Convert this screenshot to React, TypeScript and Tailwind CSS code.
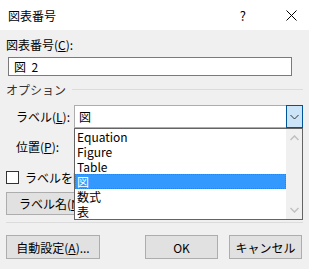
export default function App() {
  const items = ["Equation", "Figure", "Table", "図", "数式", "表"];
  return (
    <div className="relative w-[309px] h-[269px] bg-[#f0f0f0] text-[12px] text-black overflow-hidden font-['Noto_Sans_CJK_JP','Noto_Sans',sans-serif]">
      {/* title bar */}
      <div className="h-[30px] bg-white flex items-center pl-[8px]">
        <span className="leading-[15px]">図表番号</span>
        <span className="ml-auto mr-[40px] text-[13px] leading-[15px]">?</span>
        <svg width="11" height="11" viewBox="0 0 11 11" className="mr-[12px]">
          <path d="M0.5 0.5 L10.5 10.5 M10.5 0.5 L0.5 10.5" stroke="#000" strokeWidth="1" />
        </svg>
      </div>

      <div className="px-[6px]">
        <div className="mt-[7px] leading-[15px]">
          図表番号(<span className="underline">C</span>):
        </div>
        <div className="mt-[5px] ml-[2px] w-[284px] h-[19px] border border-[#7a7a7a] bg-white flex items-center pl-[5px] leading-[15px]">
          図&nbsp;&nbsp;2
        </div>

        <div className="mt-[6px] flex items-center h-[15px]">
          <span className="leading-[15px] text-[#333]">オプション</span>
          <div className="ml-[6px] flex-1 h-px bg-[#dcdcdc]" />
        </div>

        <div className="mt-[8px] flex items-center h-[23px]">
          <span className="pl-[10px] w-[68px] leading-[15px]">
            ラベル(<span className="underline">L</span>):
          </span>
          <div className="w-[229px] h-[23px] border border-[#adadad] bg-white flex items-center">
            <span className="pl-[4px] flex-1 leading-[15px]">図</span>
            <div className="w-[17px] h-[23px] -my-px -mr-px border border-[#005499] bg-[#cce4f7] flex items-center justify-center">
              <svg width="9" height="6" viewBox="0 0 9 6">
                <path d="M0.5 1 L4.5 5 L8.5 1" stroke="#333" strokeWidth="1" fill="none" />
              </svg>
            </div>
          </div>
        </div>

        <div className="mt-[7px] flex items-center h-[23px]">
          <span className="pl-[10px] w-[68px] leading-[15px]">
            位置(<span className="underline">P</span>):
          </span>
        </div>

        <div className="mt-[13px] flex items-center h-[13px]">
          <div className="w-[13px] h-[13px] border border-[#333] bg-white" />
          <span className="ml-[6px] w-[49px] overflow-hidden whitespace-nowrap leading-[15px]">ラベルを図表</span>
        </div>

        <button className="mt-[8px] w-[110px] h-[23px] border border-[#adadad] bg-[#e1e1e1] flex items-center pl-[12px] leading-[15px]">
          <span className="w-[56px] overflow-hidden whitespace-nowrap text-left">
            ラベル名(<span className="underline">N</span>)
          </span>
        </button>

        <div className="mt-[7px] h-px bg-[#dcdcdc]" />

        <div className="mt-[12px] flex h-[24px]">
          <button className="w-[94px] h-[24px] border border-[#adadad] bg-[#e1e1e1] leading-[15px]">
            自動設定(<span className="underline">A</span>)...
          </button>
          <button className="ml-[45px] w-[73px] h-[24px] border border-[#adadad] bg-[#e1e1e1] leading-[15px]">
            OK
          </button>
          <button className="ml-[11px] w-[73px] h-[24px] border border-[#adadad] bg-[#e1e1e1] leading-[15px]">
            キャンセル
          </button>
        </div>
      </div>

      {/* open dropdown list */}
      <div className="absolute left-[74px] top-[128px] w-[229px] h-[92px] border border-[#646464] bg-white flex">
        <div className="flex-1 flex flex-col">
          {items.map((it, i) =>
            i === 3 ? (
              <div
                key={it}
                className="h-[15px] leading-[13px] pl-[1px] bg-[#3399ff] text-white border border-dotted border-[#b8602a]"
              >
                {it}
              </div>
            ) : (
              <div key={it} className="h-[15px] leading-[15px] pl-[2px]">
                {it}
              </div>
            )
          )}
        </div>
        <div className="w-[16px] h-full bg-[#f0f0f0] flex flex-col items-center justify-between py-[6px]">
          <svg width="9" height="6" viewBox="0 0 9 6">
            <path d="M0.5 5 L4.5 1 L8.5 5" stroke="#c0c0c0" strokeWidth="1.5" fill="none" />
          </svg>
          <svg width="9" height="6" viewBox="0 0 9 6">
            <path d="M0.5 1 L4.5 5 L8.5 1" stroke="#c0c0c0" strokeWidth="1.5" fill="none" />
          </svg>
        </div>
      </div>
    </div>
  );
}
